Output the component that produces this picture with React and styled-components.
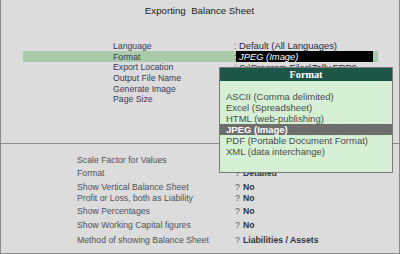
import React from 'react'
import styled, {createGlobalStyle} from 'styled-components'

const Global = createGlobalStyle`
  html, body {
    margin: 0;
    padding: 0;
    background: #dcdcdc;
  }
  body {
    font-family: "Liberation Sans", Arial, sans-serif;
  }
`

const Frame = styled.div`
  position: relative;
  width: 400px;
  height: 254px;
  box-sizing: border-box;
  background: #dcdcdc;
  border: 1px solid #8a8a8a;
  border-top: none;
  display: flex;
  flex-direction: column;
  overflow: hidden;
`

const Title = styled.div`
  height: 22px;
  line-height: 22px;
  text-align: center;
  font-size: 9.7px;
  color: #222;
  white-space: pre;
  padding-right: 1px;
`

const Upper = styled.div`
  height: 121px;
  padding-top: 18.5px;
  box-sizing: border-box;
`

const UpperRow = styled.div`
  display: flex;
  align-items: center;
  height: 10.7px;
  margin-left: 22px;
  width: 355px;
  padding-left: 90px;
  box-sizing: border-box;
  background: ${p => (p.$active ? '#a9cba9' : 'transparent')};
  white-space: nowrap;
`

const UpperLabel = styled.span`
  width: 121px;
  font-size: 8.7px;
  color: #3a3a52;
`

const Colon = styled.span`
  width: 5px;
  font-size: 9px;
  color: #555;
`

const UpperValue = styled.span`
  font-size: 9.4px;
  color: #2a2a3a;
  ${p => p.$selected && `
    flex: 1;
    margin-left: -3px;
    padding-left: 3px;
    background: #000;
    color: #fff;
    font-style: italic;
    height: 11px;
    line-height: 11px;
    margin-right: 5px;
  `}
`

const Lower = styled.div`
  flex: 1;
  border-top: 1px solid #8c8c8c;
  padding-top: 10.5px;
`

const LowerRow = styled.div`
  display: flex;
  align-items: center;
  height: 11px;
  margin-top: ${p => p.$gap || 0}px;
  padding-left: 76px;
  white-space: nowrap;
`

const LowerLabel = styled.span`
  width: 158px;
  font-size: 8.7px;
  color: #505058;
`

const Ask = styled.span`
  width: 8px;
  font-size: 8.7px;
  color: #555;
`

const LowerValue = styled.span`
  font-size: 8.7px;
  font-weight: 700;
  color: #333;
`

const Popup = styled.div`
  position: absolute;
  left: 218px;
  top: 67px;
  width: 174px;
  height: 106px;
  box-sizing: border-box;
  border: 1px solid #7c7c7c;
  background-color: #d6f1d6;
  background-image: radial-gradient(circle, #cde8cd 0.5px, transparent 0.7px);
  background-size: 3px 3px;
`

const PopupHead = styled.div`
  height: 13px;
  line-height: 13px;
  background: #1d5647;
  color: #fff;
  text-align: center;
  font-family: "Liberation Serif", "Times New Roman", serif;
  font-weight: 700;
  font-size: 10.2px;
`

const PopupList = styled.div`
  padding-top: 10px;
`

const PopupItem = styled.div`
  height: 11px;
  line-height: 11px;
  padding-left: 6px;
  font-size: 9.5px;
  white-space: nowrap;
  color: ${p => (p.$active ? '#fff' : '#4a4a4a')};
  font-weight: ${p => (p.$active ? 700 : 400)};
  background: ${p => (p.$active ? '#6e6e6e' : 'transparent')};
`

const upper = [
  {label: 'Language', value: 'Default (All Languages)'},
  {label: 'Format', value: 'JPEG (Image)', active: true},
  {label: 'Export Location', value: 'C:\\Program Files\\Tally.ERP9'},
  {label: 'Output File Name'},
  {label: 'Generate Image'},
  {label: 'Page Size'},
]

const lower = [
  {label: 'Scale Factor for Values', value: '', gap: 0},
  {label: 'Format', value: 'Detailed', gap: 2.3},
  {label: 'Show Vertical Balance Sheet', value: 'No', gap: 2.4},
  {label: 'Profit or Loss, both as Liability', value: 'No', gap: 0},
  {label: 'Show Percentages', value: 'No', gap: 2},
  {label: 'Show Working Capital figures', value: 'No', gap: 3},
  {label: 'Method of showing Balance Sheet', value: 'Liabilities / Assets', gap: 4.3},
]

const formats = [
  'ASCII (Comma delimited)',
  'Excel (Spreadsheet)',
  'HTML (web-publishing)',
  'JPEG (Image)',
  'PDF (Portable Document Format)',
  'XML (data interchange)',
]

const App = () => {
  return (
    <>
      <Global />
      <Frame>
        <Title>Exporting  Balance Sheet</Title>
        <Upper>
          {upper.map(row => (
            <UpperRow key={row.label} $active={row.active}>
              <UpperLabel>{row.label}</UpperLabel>
              {row.value && <Colon>:</Colon>}
              {row.value && <UpperValue $selected={row.active}>{row.value}</UpperValue>}
            </UpperRow>
          ))}
        </Upper>
        <Lower>
          {lower.map(row => (
            <LowerRow key={row.label} $gap={row.gap}>
              <LowerLabel>{row.label}</LowerLabel>
              {row.value && <Ask>?</Ask>}
              <LowerValue>{row.value}</LowerValue>
            </LowerRow>
          ))}
        </Lower>
        <Popup>
          <PopupHead>Format</PopupHead>
          <PopupList>
            {formats.map(f => (
              <PopupItem key={f} $active={f === 'JPEG (Image)'}>{f}</PopupItem>
            ))}
          </PopupList>
        </Popup>
      </Frame>
    </>
  )
}

export default App
